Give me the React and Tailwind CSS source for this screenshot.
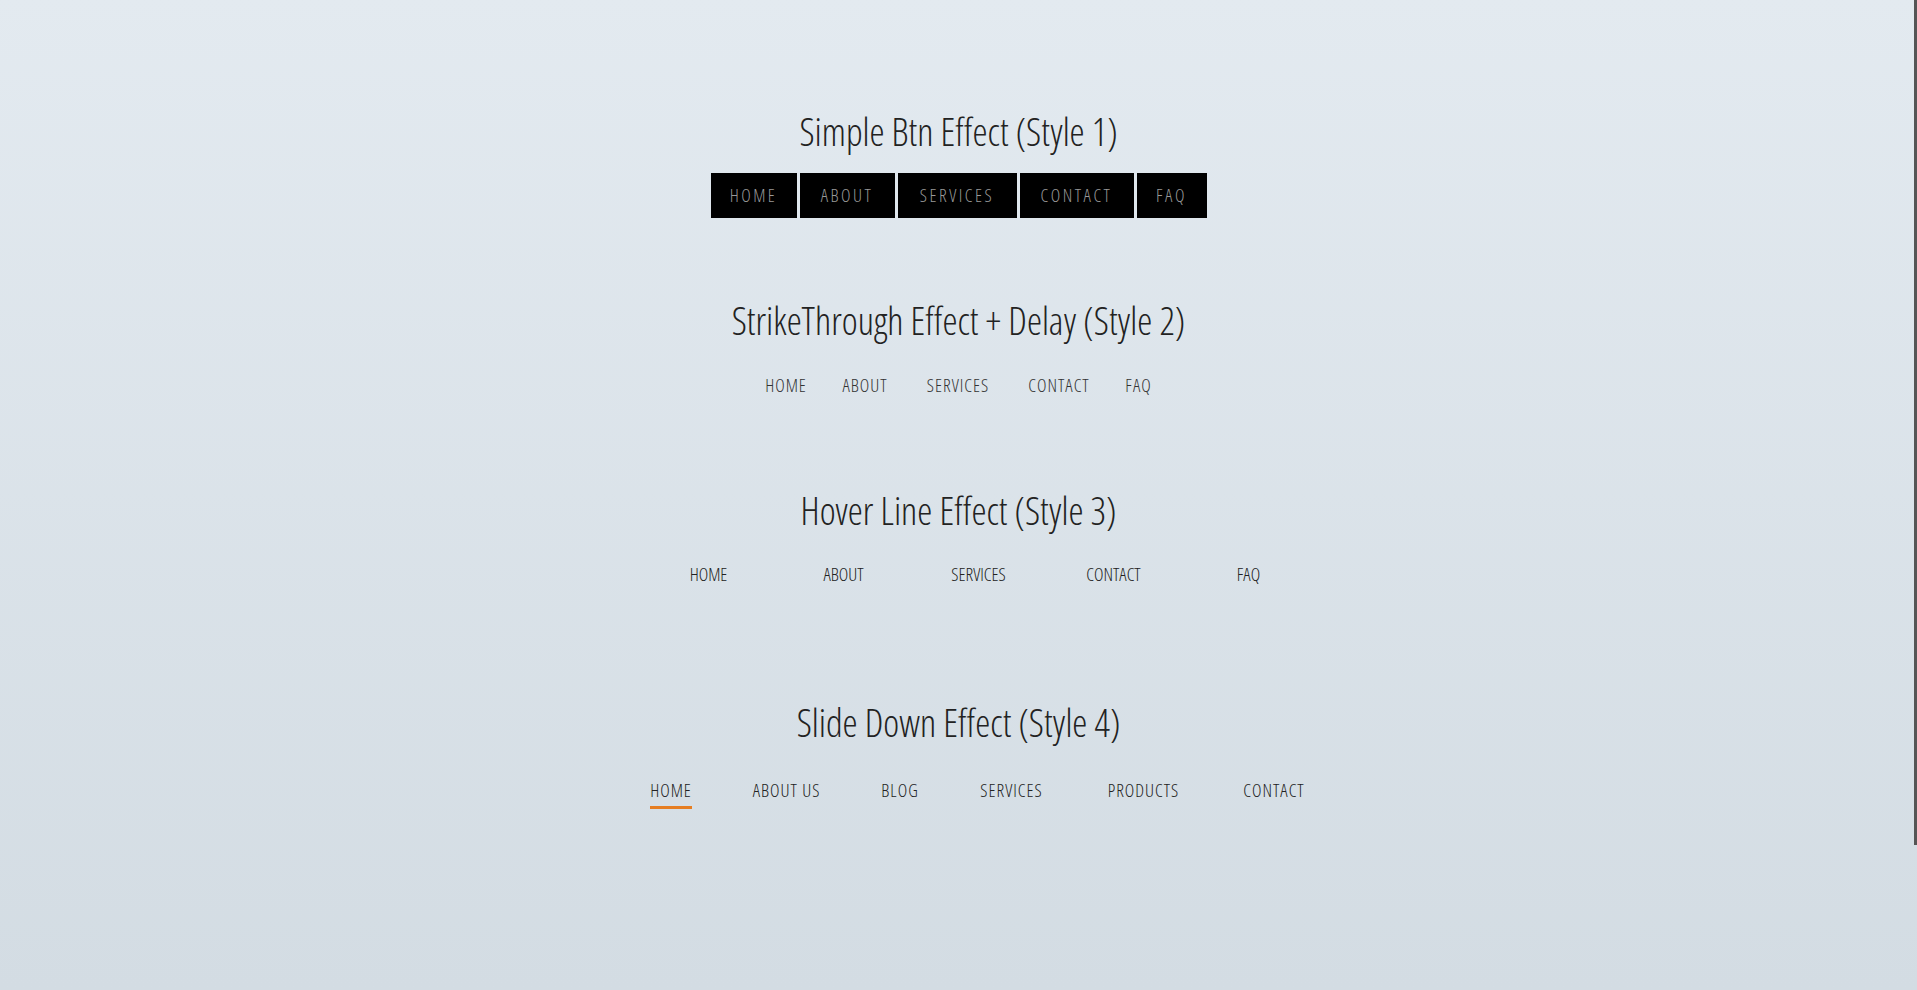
import React from 'react';

const font = "font-['Open_Sans',sans-serif] [font-stretch:75%]";

// Style 1 buttons: fixed widths taken from the reference
const style1 = [
  { label: 'HOME', w: 'w-[86px]' },
  { label: 'ABOUT', w: 'w-[95px]' },
  { label: 'SERVICES', w: 'w-[119px]' },
  { label: 'CONTACT', w: 'w-[114px]' },
  { label: 'FAQ', w: 'w-[70px]' },
];

const style2 = [
  { label: 'HOME', w: 'w-[41px]' },
  { label: 'ABOUT', w: 'w-[49px]' },
  { label: 'SERVICES', w: 'w-[69px]' },
  { label: 'CONTACT', w: 'w-[65px]' },
  { label: 'FAQ', w: 'w-[26px]' },
];

const style3 = ['HOME', 'ABOUT', 'SERVICES', 'CONTACT', 'FAQ'];

const style4 = [
  { label: 'HOME', w: 'w-[42px]', active: true },
  { label: 'ABOUT US', w: 'w-[73px]' },
  { label: 'BLOG', w: 'w-[38px]' },
  { label: 'SERVICES', w: 'w-[69px]' },
  { label: 'PRODUCTS', w: 'w-[79px]' },
  { label: 'CONTACT', w: 'w-[66px]' },
];

function Title({ children, className = '' }) {
  return (
    <h2 className={`h-[40px] leading-[40px] text-[38px] font-light text-[#222] whitespace-nowrap ${className}`}>
      {children}
    </h2>
  );
}

export default function App() {
  return (
    <div className={`relative h-screen overflow-hidden bg-gradient-to-b from-[#e3eaf0] to-[#d3dce3] ${font}`}>
      <div className="flex flex-col items-center pt-[111px]">
        {/* --- Style 1 --- */}
        <Title>Simple Btn Effect (Style 1)</Title>
        <ul className="flex gap-[3px] mt-[22px]">
          {style1.map((item) => (
            <li
              key={item.label}
              className={`${item.w} h-[45px] bg-black flex items-center justify-center text-[18px] font-[350] tracking-[2.5px] text-[#999] whitespace-nowrap`}
            >
              {item.label}
            </li>
          ))}
        </ul>

        {/* --- Style 2 --- */}
        <Title className="mt-[82px]">StrikeThrough Effect + Delay (Style 2)</Title>
        <ul className="flex gap-[34px] mt-[35px]">
          {style2.map((item) => (
            <li
              key={item.label}
              className={`${item.w} h-[20px] leading-[20px] flex justify-center text-[18px] font-[350] tracking-[1px] text-[#333] whitespace-nowrap`}
            >
              {item.label}
            </li>
          ))}
        </ul>

        {/* --- Style 3 --- */}
        <Title className="mt-[95px]">Hover Line Effect (Style 3)</Title>
        <ul className="flex pl-[40px] mt-[34px]">
          {style3.map((label) => (
            <li
              key={label}
              className="w-[135px] h-[20px] leading-[20px] flex justify-center text-[18px] font-[350] text-[#222] whitespace-nowrap"
            >
              {label}
            </li>
          ))}
        </ul>

        {/* --- Style 4 --- */}
        <Title className="mt-[118px]">Slide Down Effect (Style 4)</Title>
        <ul className="flex gap-[58px] pl-[40px] mt-[38px]">
          {style4.map((item) => (
            <li key={item.label} className={`${item.w} flex flex-col items-center`}>
              <span className="h-[20px] leading-[20px] text-[18px] font-[350] tracking-[1px] text-[#222] whitespace-nowrap">
                {item.label}
              </span>
              {item.active && <span className="w-full h-[3px] mt-[6px] bg-[#e67e22]" />}
            </li>
          ))}
        </ul>
      </div>

      {/* thin scrollbar thumb */}
      <div className="absolute top-0 right-0 w-[3px] h-[845px] bg-[#555]" />
    </div>
  );
}
